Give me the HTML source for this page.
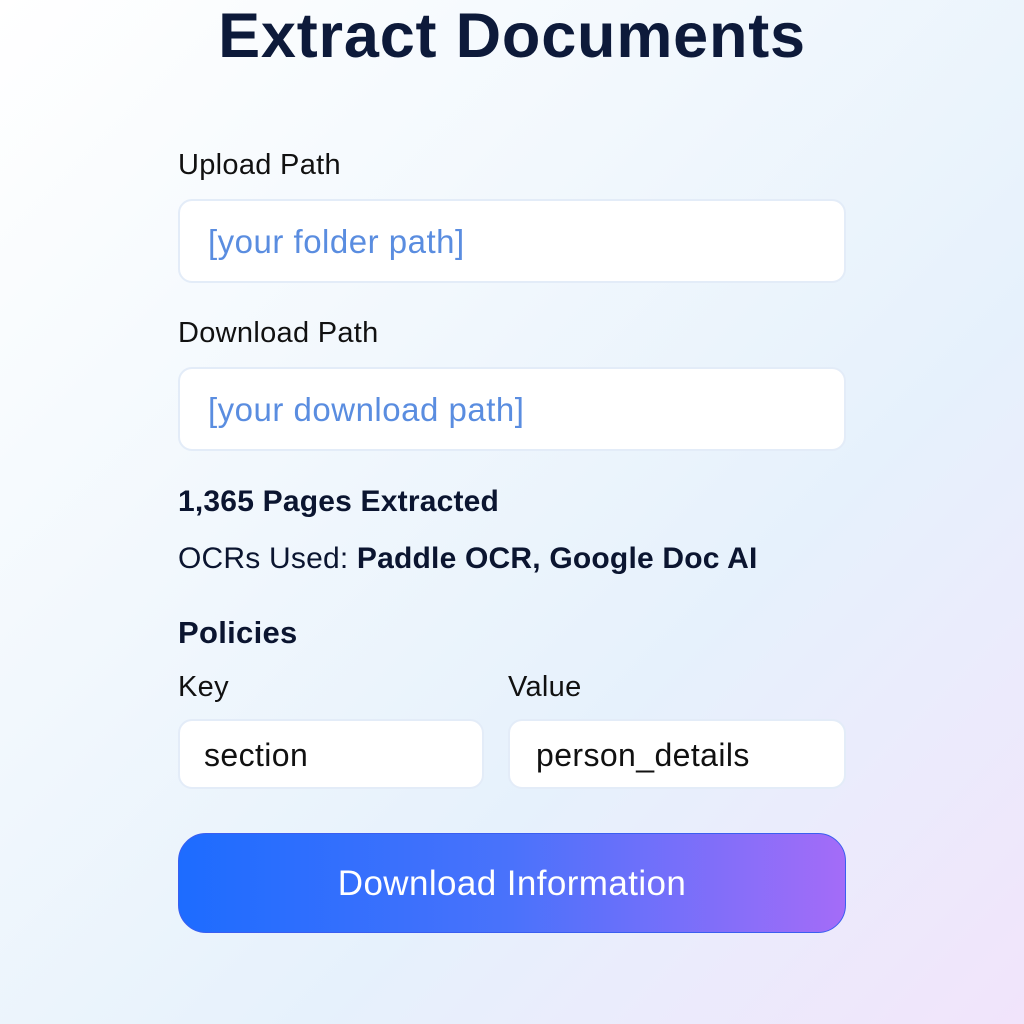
<!DOCTYPE html>
<html><head><style>
html,body{margin:0;padding:0;width:1024px;height:1024px;overflow:hidden}
body{background:linear-gradient(135deg,#ffffff 0%,#f2f8fd 35%,#e6f1fc 65%,#f1e4fb 100%);font-family:"Liberation Sans",sans-serif;color:#0b1530;position:relative}
.a{position:absolute;white-space:nowrap}
h1{position:absolute;margin:0;left:0;width:1024px;text-align:center;top:0px;font-size:63px;font-weight:bold;color:#0d1a3a;letter-spacing:0.8px}
.lbl{font-size:29px;color:#111;letter-spacing:0.3px}
.box{position:absolute;background:#fff;border:2px solid #e3ecf8;border-radius:14px;box-sizing:border-box}
.ph{font-size:33px;color:#5a8de0;letter-spacing:0.5px}
.val{font-size:32px;color:#111;letter-spacing:0.4px}
.btn{position:absolute;left:178px;top:833px;width:668px;height:100px;border-radius:28px;background:linear-gradient(90deg,#1d6cff 0%,#4a72fb 50%,#a46cf8 100%);border:1px solid #3b5ef0;box-sizing:border-box;color:#fff;font-size:35px;text-align:center;line-height:100px;letter-spacing:0.4px}
</style></head><body>
<h1>Extract Documents</h1>
<div class="a lbl" style="left:178px;top:149px">Upload Path</div>
<div class="box" style="left:178px;top:199px;width:668px;height:84px"></div>
<div class="a ph" style="left:208px;top:223px">[your folder path]</div>
<div class="a lbl" style="left:178px;top:317px">Download Path</div>
<div class="box" style="left:178px;top:367px;width:668px;height:84px"></div>
<div class="a ph" style="left:208px;top:391px">[your download path]</div>
<div class="a" style="left:178px;top:485px;font-size:30px;font-weight:bold;letter-spacing:0.2px">1,365 Pages Extracted</div>
<div class="a" style="left:178px;top:542px;font-size:30px;letter-spacing:0.2px">OCRs Used: <b>Paddle OCR, Google Doc AI</b></div>
<div class="a" style="left:178px;top:615px;font-size:31px;font-weight:bold;letter-spacing:0.3px">Policies</div>
<div class="a lbl" style="left:178px;top:671px">Key</div>
<div class="a lbl" style="left:508px;top:671px">Value</div>
<div class="box" style="left:178px;top:719px;width:306px;height:70px"></div>
<div class="a val" style="left:204px;top:737px">section</div>
<div class="box" style="left:508px;top:719px;width:338px;height:70px"></div>
<div class="a val" style="left:536px;top:737px">person_details</div>
<div class="btn">Download Information</div>
</body></html>
